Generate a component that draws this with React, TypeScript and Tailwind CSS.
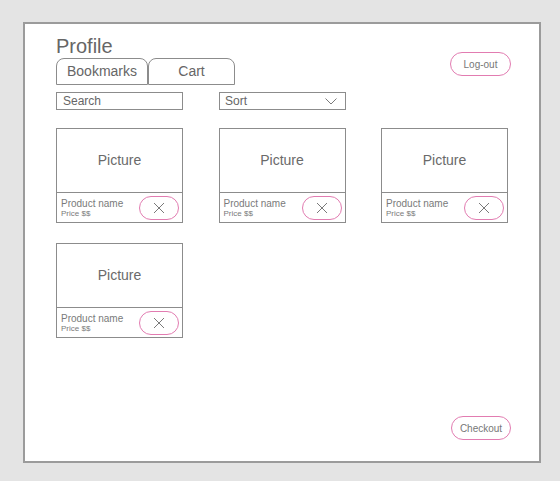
import React from "react";

const PINK = "border-[#e27cb1]";

function XIcon() {
  return (
    <svg width="12" height="12" viewBox="0 0 12 12" fill="none">
      <path d="M1 1 L11 11 M11 1 L1 11" stroke="#7a7a7a" strokeWidth="1" />
    </svg>
  );
}

function Card() {
  return (
    <div className="h-[95px] border border-[#8c8c8c] flex flex-col">
      <div className="h-[64px] border-b border-[#8c8c8c] flex items-center justify-center text-[14px] text-[#6a6a6a]">
        Picture
      </div>
      <div className="flex-1 flex items-center justify-between pl-[4px] pr-[3px]">
        <div className="flex flex-col pt-[2px] text-[#7a7a7a]">
          <span className="text-[10px] leading-[10px]">Product name</span>
          <span className="text-[8px] leading-[9px]">Price $$</span>
        </div>
        <div className={`w-[40px] h-[24px] rounded-full border-[1.5px] ${PINK} flex items-center justify-center`}>
          <XIcon />
        </div>
      </div>
    </div>
  );
}

export default function App() {
  return (
    <div
      className="w-[560px] h-[481px] bg-[#e4e4e4] pt-[22px] pl-[23px]"
      style={{ fontFamily: '"Liberation Sans", Arial, sans-serif' }}
    >
      <div className="w-[518px] h-[441px] border-2 border-[#9b9b9b] bg-white flex flex-col pl-[31px] pr-[28px] pt-[10px] pb-[21px]">
        <div className="flex justify-between">
          <div className="flex flex-col">
            <div className="text-[20px] leading-[24px] text-[#666]">Profile</div>
            <div className="flex">
              <div className="w-[92px] h-[27px] border border-[#8c8c8c] rounded-t-[8px] flex items-center justify-center text-[14px] text-[#666]">
                Bookmarks
              </div>
              <div className="w-[87px] h-[27px] border border-[#8c8c8c] rounded-t-[8px] flex items-center justify-center text-[14px] text-[#666]">
                Cart
              </div>
            </div>
          </div>
          <div className={`mt-[18px] w-[61px] h-[24px] rounded-full border-[1.5px] ${PINK} flex items-center justify-center text-[10px] text-[#777]`}>
            Log-out
          </div>
        </div>

        <div className="flex mt-[7px]">
          <div className="w-[127px] h-[18px] border border-[#8c8c8c] flex items-center pl-[6px] text-[12px] text-[#666]">
            Search
          </div>
          <div className="ml-[36px] w-[127px] h-[18px] border border-[#8c8c8c] flex items-center justify-between pl-[5px] pr-[8px] text-[12px] text-[#666]">
            <span>Sort</span>
            <svg width="12" height="7" viewBox="0 0 12 7" fill="none">
              <path d="M0.5 0.5 L6 6 L11.5 0.5" stroke="#7a7a7a" strokeWidth="1" />
            </svg>
          </div>
        </div>

        <div className="mt-[18px] grid grid-cols-[127px_127px_127px] gap-x-[35.5px] gap-y-[20px]">
          <Card />
          <Card />
          <Card />
          <Card />
        </div>

        <div className={`mt-auto self-end w-[60px] h-[24px] rounded-full border-[1.5px] ${PINK} flex items-center justify-center text-[10px] text-[#777]`}>
          Checkout
        </div>
      </div>
    </div>
  );
}
